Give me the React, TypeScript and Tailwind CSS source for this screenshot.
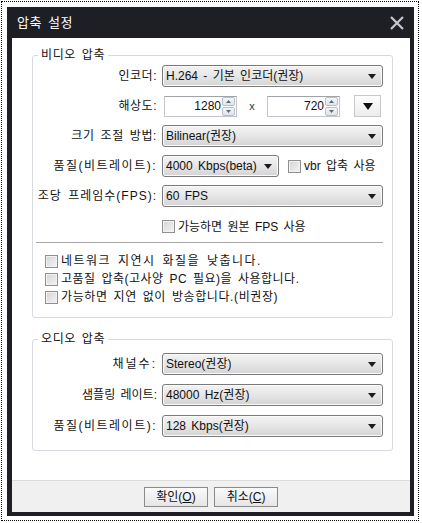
import React from "react";

const Caret = () => (
  <svg width="8" height="5" viewBox="0 0 8 5" className="shrink-0">
    <path d="M0 0h8L4 5z" fill="#1a1a1a" />
  </svg>
);

function Select({ value, className }: { value: string; className: string }) {
  return (
    <div
      className={`flex h-[22px] items-center justify-between rounded-[3px] border border-[#7a7a7a] bg-linear-to-b from-[#f3f3f3] via-[#e6e6e6] to-[#d4d4d4] pl-[3px] pr-[6px] shadow-[inset_0_0_0_1px_#fbfbfb] ${className}`}
    >
      <span className="truncate">{value}</span>
      <Caret />
    </div>
  );
}

function Check({ label, className = "" }: { label: string; className?: string }) {
  return (
    <label className={`flex items-center gap-[3px] ${className}`}>
      <span className="h-[13px] w-[13px] shrink-0 border border-[#8f8f8f] bg-linear-to-br from-[#d4d4d4] to-[#f4f4f4] shadow-[inset_0_0_0_1px_#f2f2f2]" />
      <span className="whitespace-nowrap">{label}</span>
    </label>
  );
}

function Spin({ value }: { value: string }) {
  return (
    <div className="flex h-[21px] w-[73px] items-center border border-[#c2c6cc] border-t-[#a0a4aa] bg-white pr-px">
      <span className="flex-1 pr-px text-right">{value}</span>
      <div className="flex h-[19px] w-[13px] flex-col gap-px">
        <div className="flex flex-1 items-center justify-center rounded-[2px] border border-[#b9c0c9] bg-linear-to-b from-[#f4f6f8] to-[#dfe4ea]">
          <svg width="5" height="3" viewBox="0 0 5 3"><path d="M0 3h5L2.5 0z" fill="#5c6b7c" /></svg>
        </div>
        <div className="flex flex-1 items-center justify-center rounded-[2px] border border-[#b9c0c9] bg-linear-to-b from-[#f4f6f8] to-[#dfe4ea]">
          <svg width="5" height="3" viewBox="0 0 5 3"><path d="M0 0h5L2.5 3z" fill="#5c6b7c" /></svg>
        </div>
      </div>
    </div>
  );
}

// spacing per label so the wide dotum-like labels line up with the dialog
function Row({ label, spacing, children }: { label: string; spacing: string; children: React.ReactNode }) {
  return (
    <div className="flex h-[22px] items-center gap-[5px]">
      <div className={`w-[124px] shrink-0 whitespace-nowrap text-right ${spacing}`}>{label}</div>
      {children}
    </div>
  );
}

export default function App() {
  return (
    <div className="h-[523px] w-[422px] bg-white p-px font-['Liberation_Sans','Noto_Sans_CJK_KR',sans-serif] text-[12px] leading-[14px] text-[#111] [word-spacing:2px]">
      <div className="h-[520px] w-[418px] border border-dotted border-black p-[5px]">
        <div className="flex h-[509px] w-[407px] flex-col bg-[#1e1e25]">
          {/* title bar */}
          <div className="flex h-[31px] items-center justify-between pl-[10px] pr-[9px]">
            <span className="text-[13px] tracking-[0.5px] text-white">압축 설정</span>
            <svg width="16" height="16" viewBox="0 0 16 16">
              <path d="M2 2l12 12M14 2L2 14" stroke="#c9c9cc" strokeWidth="2.2" />
            </svg>
          </div>

          <div className="mb-[4px] ml-[5px] mr-[4px] flex flex-1 flex-col bg-white">
            <div className="flex flex-1 flex-col gap-[14px] pl-[20px] pr-[17px] pt-[10px]">
              {/* video */}
              <fieldset className="rounded-[3px] border border-[#d5dadf] pb-[11px] pr-[9px]">
                <legend className="ml-[5px] px-[3px] tracking-[0.6px]">비디오 압축</legend>
                <div className="mt-[3px] flex flex-col gap-[8px]">
                  <Row label="인코더:" spacing="tracking-[0.5px]">
                    <Select value="H.264 - 기본 인코더(권장)" className="flex-1" />
                  </Row>
                  <Row label="해상도:" spacing="tracking-[0.5px]">
                    <div className="ml-[2px] flex items-center">
                      <Spin value="1280" />
                      <span className="w-[30px] text-center text-[11px] text-[#333]">x</span>
                      <Spin value="720" />
                      <div className="ml-[14px] flex h-[22px] w-[27px] items-center justify-center border border-[#c8c8c8] bg-linear-to-b from-[#fdfdfd] to-[#ececec]">
                        <svg width="10" height="7" viewBox="0 0 10 7"><path d="M0 0h10L5 7z" fill="#111" /></svg>
                      </div>
                    </div>
                  </Row>
                  <Row label="크기 조절 방법:" spacing="tracking-[0.6px]">
                    <Select value="Bilinear(권장)" className="flex-1" />
                  </Row>
                  <Row label="품질(비트레이트):" spacing="tracking-[1.5px]">
                    <Select value="4000 Kbps(beta)" className="w-[117px]" />
                    <Check label="vbr 압축 사용" className="ml-[4px]" />
                  </Row>
                  <Row label="조당 프레임수(FPS):" spacing="tracking-[1px]">
                    <Select value="60 FPS" className="flex-1" />
                  </Row>
                </div>
                <Check label="가능하면 원본 FPS 사용" className="ml-[129px] mt-[13px] h-[13px]" />
                <div className="ml-[3px] mt-[9px] h-px bg-[#a8a8a8]" />
                <div className="ml-[12px] mt-[9px] flex flex-col">
                  <Check label="네트워크 지연시 화질을 낮춥니다." className="h-[18px] tracking-[1.5px]" />
                  <Check label="고품질 압축(고사양 PC 필요)을 사용합니다." className="h-[18px] tracking-[0.5px]" />
                  <Check label="가능하면 지연 없이 방송합니다.(비권장)" className="h-[18px] tracking-[0.6px]" />
                </div>
              </fieldset>

              {/* audio */}
              <fieldset className="rounded-[3px] border border-[#d5dadf] pb-[13px] pr-[9px]">
                <legend className="ml-[5px] px-[3px] tracking-[0.6px]">오디오 압축</legend>
                <div className="mt-[7px] flex flex-col gap-[9px]">
                  <Row label="채널수:" spacing="tracking-[2px]">
                    <Select value="Stereo(권장)" className="flex-1" />
                  </Row>
                  <Row label="샘플링 레이트:" spacing="tracking-normal">
                    <Select value="48000 Hz(권장)" className="flex-1" />
                  </Row>
                  <Row label="품질(비트레이트):" spacing="tracking-[1.5px]">
                    <Select value="128 Kbps(권장)" className="flex-1" />
                  </Row>
                </div>
              </fieldset>
            </div>

            {/* footer */}
            <div className="flex h-[32px] items-center justify-center gap-[6px] border-t border-[#dcdcdc] bg-[#f0f0f0]">
              <button className="h-[20px] w-[64px] border border-[#8a8a8a] bg-linear-to-b from-[#fafafa] to-[#e6e6e6] text-[12px]">
                확인(<span className="underline">O</span>)
              </button>
              <button className="h-[20px] w-[64px] border border-[#8a8a8a] bg-linear-to-b from-[#fafafa] to-[#e6e6e6] text-[12px]">
                취소(<span className="underline">C</span>)
              </button>
            </div>
          </div>
        </div>
      </div>
    </div>
  );
}
